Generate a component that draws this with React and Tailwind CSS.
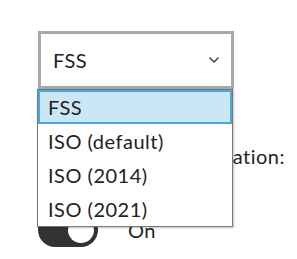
const options = ["FSS", "ISO (default)", "ISO (2014)", "ISO (2021)"];

const Chevron = () => (
    <svg width="10" height="6" viewBox="0 0 10 6" fill="none">
        <path d="M1 1l4 4 4-4" stroke="#444" strokeWidth="1.6" strokeLinecap="round" strokeLinejoin="round" />
    </svg>
);

export default function App() {
    const selected = "FSS";

    return (
        <div
            className="relative h-[259px] w-[297px] bg-white text-[#222] tracking-[0.5px]"
            style={{ fontFamily: "Lato, 'Noto Sans', sans-serif" }}
        >
            <div className="flex flex-col pl-[38px] pt-[31px]">
                <div className="flex h-[58px] w-[196px] items-center justify-between border-[3px] border-[#a9a9a9] pl-[12px] pr-[12px] text-[20px]">
                    <span>{selected}</span>
                    <Chevron />
                </div>

                <div className="mt-[52px] flex w-[247px] justify-end whitespace-nowrap text-[20px]">
                    Enable classification:
                </div>

                <div className="mt-[42px] flex items-center gap-[30px]">
                    <div className="flex h-[34px] w-[60px] items-center justify-end rounded-full bg-[#333] pr-[4px]">
                        <div className="h-[26px] w-[26px] rounded-full bg-white" />
                    </div>
                    <span className="text-[20px]">On</span>
                </div>
            </div>

            <ul className="absolute left-[37px] top-[89px] w-[196px] border border-[#767676] bg-white shadow-[1px_1px_2px_rgba(0,0,0,0.25)]">
                {options.map((opt) => (
                    <li
                        key={opt}
                        className={
                            opt === selected
                                ? "flex h-[34px] items-center border-2 border-[#4aa8e0] bg-[#cbe6f5] pl-[8px] text-[20px]"
                                : "flex h-[34px] items-center pl-[10px] text-[20px]"
                        }
                    >
                        {opt}
                    </li>
                ))}
            </ul>
        </div>
    );
}
